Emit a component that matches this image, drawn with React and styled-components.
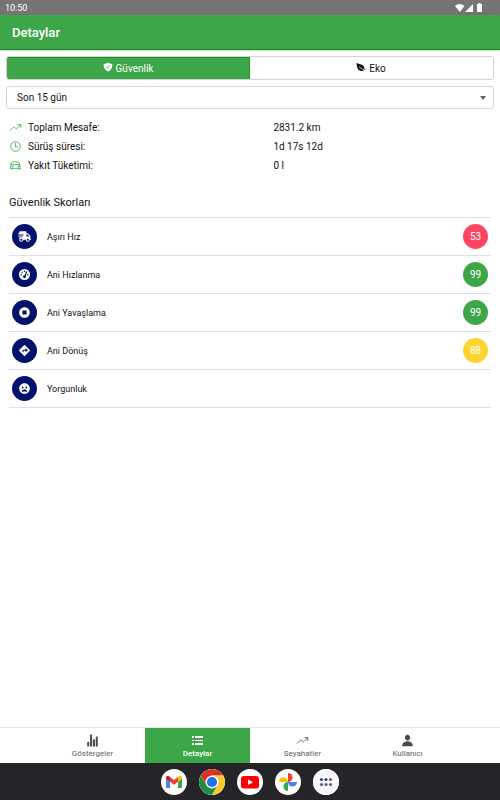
import React from "react";
import styled, { createGlobalStyle } from "styled-components";
import { IoTrendingUp, IoTimeOutline, IoCarOutline, IoShieldCheckmark, IoLeaf, IoStatsChart, IoPerson } from "react-icons/io5";
import { FaShippingFast, FaStopCircle, FaDirections, FaTired } from "react-icons/fa";

const GlobalStyle = createGlobalStyle`
  *, *::before, *::after { box-sizing: border-box; }
  body { margin: 0; background: #fff; }
  button, select { font: inherit; letter-spacing: inherit; }
`;

const green = "#3da648";
const navy = "#04126c";

const Page = styled.div`
  min-height: 100vh;
  display: flex;
  flex-direction: column;
  font-family: Roboto, "Liberation Sans", sans-serif;
  font-size: 10px;
  color: #111;
`;

const StatusBar = styled.div`
  display: flex;
  align-items: center;
  justify-content: space-between;
  height: 15px;
  padding: 0 17px 0 5px;
  background: #757575;
  color: #fff;
  font-size: 9px;
`;

const StatusIcons = styled.svg`
  width: 28px;
  height: 10px;
  fill: #fff;
`;

const Header = styled.header`
  display: flex;
  align-items: center;
  height: 35px;
  padding: 0 12px;
  background: ${green};
  border-bottom: 1px solid #158a18;
  box-shadow: 0 1px 2px rgba(0, 0, 0, 0.2);
`;

const HeaderTitle = styled.h1`
  margin: 0;
  font-size: 13px;
  font-weight: 500;
  color: #fff;
`;

const Main = styled.main`
  flex: 1;
  display: flex;
  flex-direction: column;
  padding: 6px 6px 16px;
`;

const Segment = styled.div`
  display: flex;
  height: 24px;
  border: 1px solid #d3d3d3;
  border-radius: 3px;
  overflow: hidden;
`;

const SegmentButton = styled.button`
  flex: 1;
  display: flex;
  align-items: center;
  justify-content: center;
  gap: 3px;
  padding: 0;
  border: 0;
  border-top: 1px solid ${({ $active }) => ($active ? "#1f9628" : "transparent")};
  border-right: 1px solid ${({ $active }) => ($active ? "#1f9628" : "transparent")};
  background: ${({ $active }) => ($active ? green : "#fff")};
  color: ${({ $active }) => ($active ? "#fff" : "#111")};
  svg {
    width: 10px;
    height: 10px;
    margin-bottom: 4px;
  }
`;

const SelectBox = styled.div`
  display: grid;
  align-items: center;
  margin-top: 6px;
  > * { grid-area: 1 / 1; }
`;

const Select = styled.select`
  appearance: none;
  width: 100%;
  height: 23px;
  padding: 0 24px 0 10px;
  border: 1px solid #d3d3d3;
  border-radius: 3px;
  background: #fff;
  color: #111;
`;

const Caret = styled.svg`
  justify-self: end;
  width: 6px;
  height: 4px;
  margin-right: 8px;
  fill: #616161;
  pointer-events: none;
`;

const Stats = styled.dl`
  margin: 9px 3px 0;
`;

const StatRow = styled.div`
  display: grid;
  grid-template-columns: 13px 11fr 10fr;
  column-gap: 6px;
  align-items: center;
  height: 19px;
  svg {
    width: 13px;
    height: 13px;
    color: ${green};
  }
  dt, dd { margin: 0; }
`;

const SectionTitle = styled.h2`
  margin: 20px 3px 0;
  font-size: 11px;
  line-height: 16px;
  font-weight: 400;
`;

const ScoreList = styled.ul`
  list-style: none;
  margin: 6px 3px 0;
  padding: 0;
  border-top: 1px solid #e0e0e0;
`;

const ScoreRow = styled.li`
  display: flex;
  align-items: center;
  gap: 10px;
  height: 38px;
  padding: 0 3px;
  border-bottom: 1px solid #e0e0e0;
  font-size: 9px;
`;

const Disc = styled.span`
  flex: none;
  display: flex;
  align-items: center;
  justify-content: center;
  width: 25px;
  height: 25px;
  border-radius: 50%;
  background: ${({ $color }) => $color};
  color: #fff;
  font-size: 10px;
  svg {
    width: ${({ $icon }) => $icon}px;
    height: ${({ $icon }) => $icon}px;
  }
`;

const ScoreName = styled.span`
  flex: 1;
`;

const TabBar = styled.nav`
  display: flex;
  justify-content: center;
  height: 36px;
  border-top: 1px solid #e8e8e8;
`;

const Tab = styled.button`
  flex: 0 1 105px;
  display: flex;
  flex-direction: column;
  align-items: center;
  justify-content: center;
  gap: 2px;
  padding: 0;
  border: 0;
  background: ${({ $active }) => ($active ? green : "#fff")};
  color: ${({ $active }) => ($active ? "#fff" : "#616161")};
  font-size: 8px;
  line-height: 9px;
  font-weight: ${({ $active }) => ($active ? 500 : 400)};
  svg {
    width: 13px;
    height: 13px;
    color: ${({ $active }) => ($active ? "#fff" : "#4a4a4a")};
  }
`;

const Dock = styled.footer`
  display: flex;
  justify-content: center;
  align-items: center;
  gap: 12px;
  height: 37px;
  background: #242429;
`;

const AppButton = styled.button`
  width: 26px;
  height: 26px;
  padding: 0;
  border: 0;
  border-radius: 50%;
  background: #fff;
  overflow: hidden;
  svg { display: block; width: 26px; height: 26px; }
`;

const ListIcon = () => (
  <svg viewBox="0 0 13 13" fill="currentColor" aria-hidden="true">
    <path d="M1 2h2v2H1zM4 2h8v2H4zM1 6h2v1H1zM4 6h8v1H4zM1 9h2v2H1zM4 9h8v2H4z" />
  </svg>
);

const GaugeIcon = () => (
  <svg viewBox="0 0 20 20" aria-hidden="true">
    <circle cx="10" cy="10" r="10" fill="#fff" />
    <g fill={navy}>
      <circle cx="4" cy="10.500" r="1.300" />
      <circle cx="5.800" cy="5.800" r="1.300" />
      <circle cx="10" cy="4" r="1.300" />
      <circle cx="16" cy="10.500" r="1.300" />
      <circle cx="10" cy="14" r="2.600" />
    </g>
    <path d="M10 14l4-9" stroke={navy} strokeWidth="2" strokeLinecap="round" />
  </svg>
);

const Gmail = () => (
  <svg viewBox="0 0 26 26">
    <path fill="#4285f4" d="M5 9.5l4 3V19H6a1 1 0 0 1-1-1z" />
    <path fill="#34a853" d="M21 9.5l-4 3V19h3a1 1 0 0 0 1-1z" />
    <path fill="#ea4335" d="M9 8l4 3 4-3v4.8l-4 3-4-3z" />
    <path fill="#c5221f" d="M5 8.8C5 7 7 6.3 8.3 7.4L9 8v4.8l-4-3z" />
    <path fill="#fbbc04" d="M21 8.8c0-1.8-2-2.5-3.3-1.4L17 8v4.8l4-3z" />
  </svg>
);

const Chrome = () => (
  <svg viewBox="0 0 26 26">
    <path fill="#d93025" d="M1.740 6.500a13 13 0 0 1 22.520 0H13L7.370 16.250z" />
    <path fill="#1e8e3e" d="M1.740 6.500A13 13 0 0 0 13 26l5.630-9.750L13 19.500l-5.630-3.250z" />
    <path fill="#fcc934" d="M24.260 6.500A13 13 0 0 1 13 26l5.630-9.750L13 6.500z" />
    <circle cx="13" cy="13" r="6.5" fill="#fff" />
    <circle cx="13" cy="13" r="5.1" fill="#1a73e8" />
  </svg>
);

const YouTube = () => (
  <svg viewBox="0 0 26 26">
    <rect x="4" y="7" width="18" height="12.5" rx="3" fill="#f00" />
    <path d="M11 10.5l5 2.7-5 2.8z" fill="#fff" />
  </svg>
);

const Photos = () => (
  <svg viewBox="0 0 26 26">
    <path fill="#ea4335" d="M13 4a4.4 4.4 0 0 1 0 9z" />
    <path fill="#4285f4" d="M22 13a4.4 4.4 0 0 1-9 0z" />
    <path fill="#34a853" d="M13 22a4.4 4.4 0 0 1 0-9z" />
    <path fill="#fbbc04" d="M4 13a4.4 4.4 0 0 1 9 0z" />
  </svg>
);

const AllApps = () => (
  <svg viewBox="0 0 26 26">
    <rect width="26" height="26" fill="#f8f5fc" />
    <g fill="#34457f">
      <circle cx="8.5" cy="10.5" r="1.6" />
      <circle cx="13" cy="10.5" r="1.6" />
      <circle cx="17.5" cy="10.5" r="1.6" fill="#85527d" />
    </g>
    <g fill="#596181">
      <circle cx="8.5" cy="15.5" r="1.6" />
      <circle cx="13" cy="15.5" r="1.6" />
      <circle cx="17.5" cy="15.5" r="1.6" />
    </g>
  </svg>
);

const stats = [
  { Icon: IoTrendingUp, label: "Toplam Mesafe:", value: "2831.2 km" },
  { Icon: IoTimeOutline, label: "Sürüş süresi:", value: "1d 17s 12d" },
  { Icon: IoCarOutline, label: "Yakıt Tüketimi:", value: "0 l" },
];

const scores = [
  { Icon: FaShippingFast, size: 13, name: "Aşırı Hız", score: 53, color: "#ff4560" },
  { Icon: GaugeIcon, size: 11, name: "Ani Hızlanma", score: 99, color: green },
  { Icon: FaStopCircle, size: 11, name: "Ani Yavaşlama", score: 99, color: green },
  { Icon: FaDirections, size: 11, name: "Ani Dönüş", score: 88, color: "#ffd42e" },
  { Icon: FaTired, size: 11, name: "Yorgunluk" },
];

const tabs = [
  { Icon: IoStatsChart, label: "Göstergeler" },
  { Icon: ListIcon, label: "Detaylar", active: true },
  { Icon: IoTrendingUp, label: "Seyahatler" },
  { Icon: IoPerson, label: "Kullanıcı" },
];

const apps = [
  { Icon: Gmail, label: "Gmail" },
  { Icon: Chrome, label: "Chrome" },
  { Icon: YouTube, label: "YouTube" },
  { Icon: Photos, label: "Photos" },
  { Icon: AllApps, label: "Apps" },
];

export default function App() {
  return (
    <Page>
      <GlobalStyle />
      <StatusBar>
        <time>10:50</time>
        <StatusIcons viewBox="0 0 28 10" aria-hidden="true">
          <path d="M0 3Q4.5-1 9.500 3L4.800 9z" />
          <path d="M10 9L18 1v8z" />
          <path d="M23.500 0h2v1h1.500v8h-5V1h1.500z" />
        </StatusIcons>
      </StatusBar>
      <Header>
        <HeaderTitle>Detaylar</HeaderTitle>
      </Header>
      <Main>
        <Segment>
          <SegmentButton type="button" $active aria-pressed="true">
            <IoShieldCheckmark />
            Güvenlik
          </SegmentButton>
          <SegmentButton type="button" aria-pressed="false">
            <IoLeaf />
            Eko
          </SegmentButton>
        </Segment>
        <SelectBox>
          <Select aria-label="Son 15 gün" defaultValue="15">
            <option value="15">Son 15 gün</option>
          </Select>
          <Caret viewBox="0 0 6 4" aria-hidden="true">
            <path d="M0 0h6L3 4z" />
          </Caret>
        </SelectBox>
        <Stats>
          {stats.map(({ Icon, label, value }) => (
            <StatRow key={label}>
              <Icon />
              <dt>{label}</dt>
              <dd>{value}</dd>
            </StatRow>
          ))}
        </Stats>
        <SectionTitle>Güvenlik Skorları</SectionTitle>
        <ScoreList>
          {scores.map(({ Icon, size, name, score, color }) => (
            <ScoreRow key={name}>
              <Disc $color={navy} $icon={size}>
                <Icon />
              </Disc>
              <ScoreName>{name}</ScoreName>
              {score && <Disc $color={color}>{score}</Disc>}
            </ScoreRow>
          ))}
        </ScoreList>
      </Main>
      <TabBar>
        {tabs.map(({ Icon, label, active }) => (
          <Tab key={label} type="button" $active={active} aria-current={active ? "page" : undefined}>
            <Icon />
            {label}
          </Tab>
        ))}
      </TabBar>
      <Dock>
        {apps.map(({ Icon, label }) => (
          <AppButton key={label} type="button" aria-label={label}>
            <Icon />
          </AppButton>
        ))}
      </Dock>
    </Page>
  );
}
